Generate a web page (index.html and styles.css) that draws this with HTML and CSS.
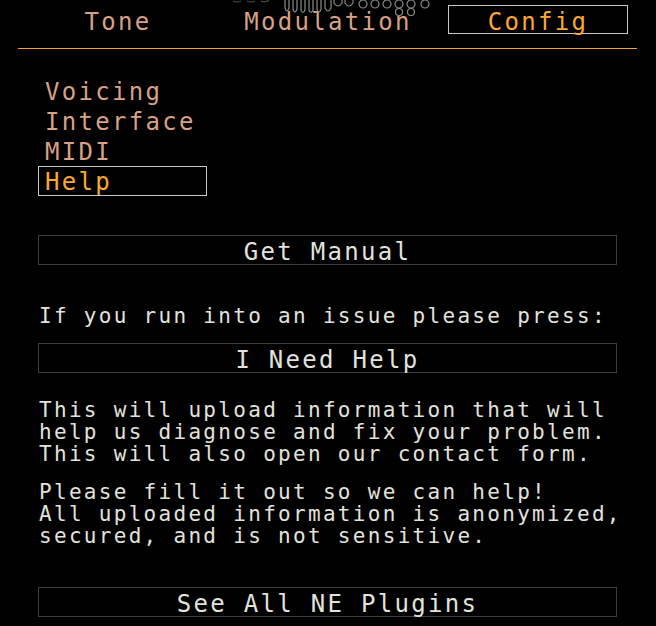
FILE: index.html
```html
<!DOCTYPE html>
<html lang="en">
<head>
    <meta charset="UTF-8">
    <meta name="viewport" content="width=device-width, initial-scale=1.0">
    <title>Config - Help</title>
    <link rel="stylesheet" href="styles.css">
</head>
<body>

<header class="topbar">
    <!-- logo waveform, only its lower edge shows above the tabs -->
    <svg class="wave" width="230" height="20" viewBox="0 0 230 20">
        <path class="faint" d="M18 1 q4 2 8 0 M32 1 q4 2 8 0 M46 1 q4 2 8 -1" />
        <path d="M70 0 v8 q2 6 4 0 v-8 M78 0 v9 q2 6 4 0 v-9 M86 0 v10 q2 5 4 0 v-10 M94 0 v10 q2 5 4 0 v-10 M102 0 v9 q2 6 4 0 v-9 M110 0 v8 q3 6 6 0 v-8" />
        <path d="M119 0 v3 q4 6 8 0 v-3 M130 0 v3 q4 6 8 0 v-3" />
        <circle cx="148" cy="4" r="4" />
        <circle cx="160" cy="4" r="4" />
        <circle cx="172" cy="4" r="4" />
        <circle cx="184" cy="4" r="4" />
        <circle cx="184" cy="12" r="3.5" />
        <circle cx="196" cy="4" r="4" />
        <circle cx="196" cy="12" r="3.5" />
        <circle cx="210" cy="4" r="4" />
    </svg>
    <nav class="tabs">
        <div class="tab">Tone</div>
        <div class="tab">Modulation</div>
        <div class="tab active">Config</div>
    </nav>
</header>

<div class="content">

    <!-- sub pages of Config -->
    <ul class="menu">
        <li>Voicing</li>
        <li>Interface</li>
        <li>MIDI</li>
        <li class="active">Help</li>
    </ul>

    <div class="button">Get Manual</div>

    <p class="line">If you run into an issue please press:</p>

    <div class="button">I Need Help</div>

    <p class="text">This will upload information that will<br>help us diagnose and fix your problem.<br>This will also open our contact form.</p>

    <p class="text">Please fill it out so we can help!<br>All uploaded information is anonymized,<br>secured, and is not sensitive.</p>

    <div class="button last">See All NE Plugins</div>

</div>

</body>
</html>
```

FILE: styles.css
```css
/* base */
body {
    margin: 0;
    padding: 0;
    background-color: #000;
    color: #e2e2dc;
    font-family: "DejaVu Sans Mono", "Liberation Mono", monospace;
    overflow: hidden;
}

/* top tabs */
.topbar {
    position: relative;
    height: 48px;
    margin: 0 19px 0 18px;
    border-bottom: 1px solid #f4a12e;
}

.wave {
    position: absolute;
    left: 197px;
    top: 0;
    fill: none;
    stroke: #8a8a86;
    stroke-width: 1.2;
}

.wave .faint {
    stroke: #4a4a48;
}

.tabs {
    display: grid;
    grid-template-columns: 210px 210px 210px;
    margin-left: -5px;
    padding-top: 5px;
}

.tab {
    height: 29px;
    margin: 0 15px;
    border: 1px solid transparent;
    box-sizing: border-box;
    text-align: center;
    font-size: 24px;
    letter-spacing: 2.3px;
    line-height: 33px;
    color: #d8a185;
}

.tab.active {
    color: #fba82f;
    border-color: #c8c8c4;
}

/* page */
.content {
    padding: 0 39px 0 38px;
}

.menu {
    list-style: none;
    margin: 27px 0 0 0;
    padding: 0;
}

.menu li {
    width: 169px;
    height: 30px;
    box-sizing: border-box;
    padding-left: 6px;
    border: 1px solid transparent;
    font-size: 24px;
    letter-spacing: 2.3px;
    line-height: 31px;
    color: #d8a185;
}

.menu li.active {
    color: #fba82f;
    border-color: #c8c8c4;
}

.button {
    height: 30px;
    box-sizing: border-box;
    border: 1px solid #3c3c3a;
    text-align: center;
    font-size: 24px;
    letter-spacing: 2.3px;
    line-height: 32px;
    color: #e2e2dc;
}

.menu + .button {
    margin-top: 39px;
}

.line {
    margin: 40px 0 16px 1px;
    font-size: 21px;
    letter-spacing: 2.3px;
    line-height: 22px;
    white-space: nowrap;
}

.text {
    margin: 16px 0 0 1px;
    font-size: 21px;
    letter-spacing: 2.3px;
    line-height: 22px;
    white-space: nowrap;
}

.button + .text {
    margin-top: 26px;
}

.button.last {
    margin-top: 40px;
}
```
